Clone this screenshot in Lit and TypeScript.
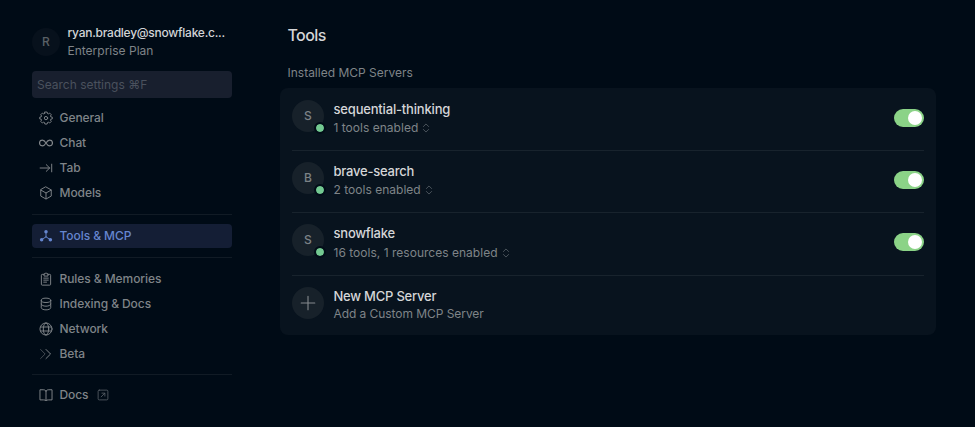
import { LitElement, html, css, svg, nothing } from "lit";
import { customElement, property, state } from "lit/decorators.js";
import { classMap } from "lit/directives/class-map.js";

const icons: Record<string, unknown> = {
  gear: svg`<path d="M6.7 1.200h2.600l.4 1.700 1 .4 1.500-.9 1.800 1.800-.9 1.500.4 1 1.700.4v1.900l-1.700.4-.4 1 .9 1.500-1.800 1.800-1.500-.9-1 .4-.4 1.700H6.700l-.4-1.700-1-.4-1.500.9L2 11.900l.9-1.500-.4-1-1.700-.4V7.100l1.700-.4.4-1L2 4.200l1.800-1.800 1.500.9 1-.4z"/><circle cx="8" cy="8.100" r="1.900"/>`,
  infinity: svg`<path stroke-width="1.400" d="M8 8C6.700 5.900 5.700 4.700 3.900 4.700a3.300 3.300 0 0 0 0 6.600C5.700 11.300 6.700 10.100 8 8s2.300-3.300 4.100-3.300a3.300 3.300 0 0 1 0 6.600C10.300 11.300 9.300 10.100 8 8z"/>`,
  tab: svg`<path d="M1.300 8h11M8.300 4.200 12.200 8l-3.900 3.800M14.500 3.600v8.800"/>`,
  cube: svg`<path d="M8 1.100 14 4.500v7L8 14.900 2 11.500v-7zM2.200 4.700 8 8l5.800-3.300M8 8v6.600"/>`,
  nodes: svg`<path d="M8 4v5M8 9l-4.500 2.800M8 9l4.500 2.800"/><g fill="currentColor" stroke="none"><circle cx="8" cy="3.200" r="2"/><circle cx="3" cy="12.300" r="2"/><circle cx="13" cy="12.300" r="2"/></g>`,
  clipboard: svg`<path d="M5.600 2.700H3.700a1 1 0 0 0-1 1V14a1 1 0 0 0 1 1h8.600a1 1 0 0 0 1-1V3.700a1 1 0 0 0-1-1h-1.900M5.700 4.200V2.100h1.300a1 1 0 0 1 2 0h1.300v2.100zM5.400 7h5.200M5.400 9.300h5.200M5.400 11.600h3.200"/>`,
  database: svg`<ellipse cx="8" cy="3.800" rx="5.400" ry="2.500"/><path d="M2.600 3.800v8.400c0 1.400 2.400 2.500 5.400 2.500s5.400-1.100 5.400-2.500V3.800M2.600 8c0 1.400 2.400 2.500 5.400 2.500s5.400-1.100 5.400-2.500"/>`,
  globe: svg`<circle cx="8" cy="8" r="6.900"/><ellipse cx="8" cy="8" rx="3.100" ry="6.900"/><path d="M1.800 5.700h12.400M1.800 10.300h12.400"/>`,
  chevrons: svg`<path opacity=".55" d="m1.800 2.800 5.200 5.200-5.200 5.200"/><path d="m8 2.800 5.200 5.200L8 13.200"/>`,
  book: svg`<path d="M8 3.400C7.300 2.400 6.200 2 4.800 2H1.100v11.600h4.100c1.400 0 2.200.3 2.800.9.600-.6 1.400-.9 2.800-.9h4.100V2h-3.700C9.800 2 8.700 2.400 8 3.400zM8 3.400v10.900"/>`,
  external: svg`<rect x="1.500" y="1.500" width="13" height="13" rx="1.500"/><path d="m5.500 10.500 4.800-4.800M6.600 5.500h3.900v3.900"/>`,
  plus: svg`<path d="M8 1.200v13.600M1.200 8h13.600"/>`,
  updown: svg`<path d="M3.800 5.700 8 1.500l4.200 4.200M3.800 10.300 8 14.500l4.200-4.200"/>`,
};

@customElement("ui-icon")
class UiIcon extends LitElement {
  @property() name = "";
  static styles = css`
    :host { display: block; flex: none; width: 14px; height: 14px; }
    .glyph { display: block; width: 100%; height: 100%; fill: none; stroke: currentColor; stroke-width: 1.1; stroke-linejoin: round; stroke-linecap: round; }
  `;
  render() {
    return html`<svg class="glyph" viewBox="0 0 16 16">${icons[this.name]}</svg>`;
  }
}

@customElement("settings-sidebar")
class SettingsSidebar extends LitElement {
  @state() active = "Tools & MCP";
  groups = [
    [["General", "gear"], ["Chat", "infinity"], ["Tab", "tab"], ["Models", "cube"]],
    [["Tools & MCP", "nodes"]],
    [["Rules & Memories", "clipboard"], ["Indexing & Docs", "database"], ["Network", "globe"], ["Beta", "chevrons"]],
    [["Docs", "book"]],
  ];
  static styles = css`
    :host { display: block; width: 200px; padding: 23px 0 0 32px; flex: none; }
    .account { display: flex; align-items: center; gap: 7.5px; height: 37px; }
    .avatar { width: 28px; height: 28px; border-radius: 50%; background: #07111c; color: #5a6066; display: grid; place-items: center; flex: none; font-size: 12px; font-weight: 500; }
    .who { display: flex; flex-direction: column; line-height: 18px; white-space: nowrap; }
    .email { color: #d2d4d6; font-weight: 500; letter-spacing: -0.25px; }
    .plan { color: #7f8488; }
    .search { box-sizing: border-box; height: 27px; margin-top: 11px; padding: 0 5px; border-radius: 4px; background: #181f2e; color: #4a515d; line-height: 27px; }
    .group { display: flex; flex-direction: column; gap: 1px; padding: 9px 0; border-bottom: 1px solid #111b25; }
    .group:first-of-type { padding-top: 0; }
    .group:nth-child(3) { padding-bottom: 8px; }
    .nav { padding-top: 8px; }
    .group:last-child { border: 0; padding-top: 8px; }
    .item { display: flex; align-items: center; gap: 7px; height: 24px; padding: 0 6.5px; border-radius: 4px; color: #7f8488; cursor: pointer; font-weight: 500; letter-spacing: -0.07px; }
    .active { background: #141e35; color: #6686cf; }
    .out { width: 12px; height: 12px; margin-left: 1px; color: #596067; }
  `;
  render() {
    return html`
      <div class="account">
        <div class="avatar">R</div>
        <div class="who"><span class="email">ryan.bradley@snowflake.c...</span><span class="plan">Enterprise Plan</span></div>
      </div>
      <div class="search">Search settings ⌘F</div>
      <nav class="nav">
        ${this.groups.map((g) => html`<div class="group">${g.map(([label, icon]) => html`
          <div class=${classMap({ item: true, active: label === this.active })} @click=${() => (this.active = label)}>
            <ui-icon name=${icon}></ui-icon><span>${label}</span>
            ${label === "Docs" ? html`<ui-icon class="out" name="external"></ui-icon>` : nothing}
          </div>`)}</div>`)}
      </nav>`;
  }
}

@customElement("toggle-switch")
class ToggleSwitch extends LitElement {
  @state() on = true;
  static styles = css`
    :host { display: block; margin-left: auto; }
    .track { display: flex; box-sizing: border-box; width: 30px; height: 18px; padding: 2px; border-radius: 9px; background: #384049; cursor: pointer; }
    .on { justify-content: flex-end; background: #8bd387; }
    .knob { width: 14px; height: 14px; border-radius: 50%; background: #fff; }
  `;
  render() {
    return html`<div class=${classMap({ track: true, on: this.on })} @click=${() => (this.on = !this.on)}><div class="knob"></div></div>`;
  }
}

@customElement("server-list")
class ServerList extends LitElement {
  servers = [
    ["S", "sequential-thinking", "1 tools enabled"],
    ["B", "brave-search", "2 tools enabled"],
    ["S", "snowflake", "16 tools, 1 resources enabled"],
  ];
  static styles = css`
    :host { display: block; background: #08131e; border-radius: 8px; padding: 0 12px; }
    .row { display: flex; box-sizing: border-box; align-items: flex-start; gap: 9.5px; height: 62px; padding-top: 11px; border-bottom: 1px solid #18232d; }
    .row:first-child { height: 63px; padding-top: 12px; }
    .row:nth-child(3) { height: 63px; }
    .row:last-child { height: 59px; border: 0; }
    .avatar { position: relative; flex: none; display: grid; place-items: center; width: 32px; height: 32px; border-radius: 50%; background: #17212a; color: #7c8286; font-size: 12px; font-weight: 500; }
    .dot { position: absolute; right: -2px; bottom: -2px; width: 8px; height: 8px; border: 2px solid #020d18; border-radius: 50%; background: #73c991; background-clip: padding-box; }
    .text { line-height: 18px; white-space: nowrap; }
    .name { color: #d5d6d8; font-size: 13px; font-weight: 500; letter-spacing: -0.22px; }
    .row:first-child .name { letter-spacing: -0.18px; }
    .detail { display: flex; align-items: center; gap: 3px; padding-top: 1px; letter-spacing: 0.02px; color: #7f8488; }
    .row:nth-child(3) .detail { padding-top: 2px; }
    .row:last-child .detail { padding-top: 0; letter-spacing: -0.06px; }
    .arrows { width: 10px; height: 10px; color: #697077; }
    .plus { width: 16px; height: 16px; color: #858a8e; }
    toggle-switch { margin-top: 9px; }
  `;
  render() {
    return html`
      ${this.servers.map(([initial, name, detail]) => html`<div class="row">
        <div class="avatar">${initial}<div class="dot"></div></div>
        <div class="text"><div class="name">${name}</div><div class="detail"><span>${detail}</span><ui-icon class="arrows" name="updown"></ui-icon></div></div>
        <toggle-switch></toggle-switch>
      </div>`)}
      <div class="row">
        <div class="avatar"><ui-icon class="plus" name="plus"></ui-icon></div>
        <div class="text"><div class="name">New MCP Server</div><div class="detail">Add a Custom MCP Server</div></div>
      </div>`;
  }
}

@customElement("app-root")
class AppRoot extends LitElement {
  static styles = css`
    :host { display: flex; gap: 48px; height: 427px; overflow: hidden; background: #000b16; font: 12px/18px Inter, "Noto Sans", sans-serif; }
    .main { width: 656px; }
    .title { margin: 25px 0 0 7.5px; font-size: 16px; line-height: 20px; font-weight: 500; letter-spacing: -0.6px; color: #d4d5d7; }
    .section { margin: 18px 0 6px 7.5px; line-height: 19px; color: #7f8488; }
  `;
  render() {
    return html`
      <settings-sidebar></settings-sidebar>
      <main class="main">
        <h1 class="title">Tools</h1>
        <div class="section">Installed MCP Servers</div>
        <server-list></server-list>
      </main>`;
  }
}
